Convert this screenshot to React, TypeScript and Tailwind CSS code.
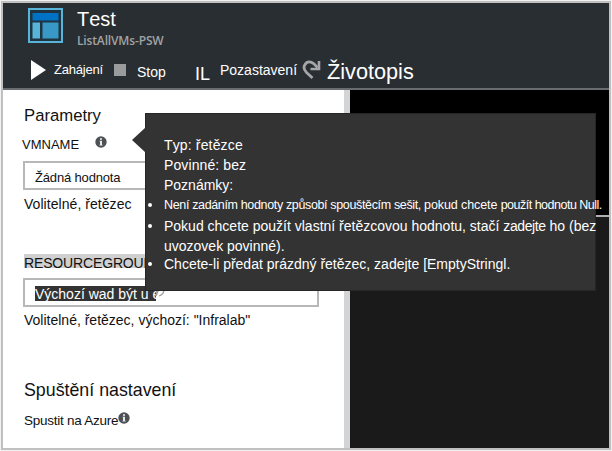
import React from "react";

function InfoIcon({ className = "" }: { className?: string }) {
  return (
    <svg className={className} width="12" height="12" viewBox="0 0 12 12">
      <circle cx="6" cy="6" r="5.7" fill="#4d5155" />
      <circle cx="6" cy="3" r="1.1" fill="#e8e8e8" />
      <path d="M4.6 4.8H7v4h.7v.7H4.4v-.7H5V5.5h-.4z" fill="#e8e8e8" />
    </svg>
  );
}

function RunbookIcon() {
  return (
    <svg width="35" height="35" viewBox="0 0 35 35" className="shrink-0">
      <rect x="1" y="1" width="33" height="33" fill="#1f3440" stroke="#59b4d9" strokeWidth="2" />
      <rect x="4.5" y="5" width="26" height="7.5" fill="#0072c6" />
      <rect x="4.5" y="14.5" width="7.5" height="16" fill="#59b4d9" />
      <rect x="14.5" y="14.5" width="16" height="16" fill="#3999c6" />
    </svg>
  );
}

function Header() {
  return (
    <header className="h-[87px] bg-[#292e32] border-b-2 border-[#6a6d70] text-white">
      <div className="flex h-[50px] pl-[25px] pt-[5px]">
        <RunbookIcon />
        <div className="ml-[14px]">
          <div className="text-[20px] leading-5 mt-[1px] [font-kerning:none]">Test</div>
          <div className="mt-[4px] font-['Open_Sans',sans-serif] text-[12px] font-semibold leading-4 tracking-[-0.15px] text-[#a0a3a5]">
            ListAllVMs-PSW
          </div>
        </div>
      </div>
      <div className="flex h-[35px] items-start pl-[28px] leading-5">
        <svg width="15" height="20" viewBox="0 0 15 20" className="mt-[7px]">
          <path d="M0 0v20L15 10z" fill="#fff" />
        </svg>
        <div className="ml-[8px] w-[60px] mt-[7px] text-[13px] tracking-[-0.2px]">Zahájení</div>
        <div className="mt-[11px] size-[12px] bg-[#999b9d]" />
        <div className="ml-[11px] mt-[9px] w-[58px] text-[14px]">Stop</div>
        <div className="mt-[11px] w-[25px] text-[18px]">IL</div>
        <div className="mt-[7px] w-[82px] text-[14px]">Pozastavení</div>
        <svg width="19" height="21" viewBox="0 0 19 21" className="mt-[6px]">
          <path d="M10.5 19 L4.5 13.5 C-1 8 4 1.5 9.5 3.3 C12.5 4.3 13.5 6.5 15.5 8.5" fill="none" stroke="#a4a6a8" strokeWidth="2.8" />
          <path d="M17 2v8H8.5" fill="none" stroke="#a4a6a8" strokeWidth="2.6" />
        </svg>
        <div className="ml-[6px] mt-[9px] text-[21.7px]">Životopis</div>
      </div>
    </header>
  );
}

function Parameters() {
  return (
    <section className="w-[347px] shrink-0 border-r-[6px] border-[#d2d4d6] bg-white pl-[20px] pt-[16px] leading-5 text-[#111]">
      <h2 className="pl-px text-[16.7px]">Parametry</h2>
      <div className="mt-[9px] -ml-px flex text-[13px]">
        VMNAME
        <InfoIcon className="ml-[16px] mt-[1px]" />
      </div>
      <div className="mt-[6px] h-[29px] w-[296px] border-2 border-[#b8b8b8] pl-[10px] pt-[5px] text-[13px] tracking-[-0.16px]">
        Žádná hodnota
      </div>
      <div className="mt-[4px] pl-px text-[14px] tracking-[0.05px]">Volitelné, řetězec</div>
      <div className="ml-px mt-[40px] h-[14px] w-[121px] bg-[#d0d0d0] text-[14px] leading-[18px] tracking-[-0.15px]">
        RESOURCEGROUP
      </div>
      <div className="mt-[10px] flex h-[29px] w-[296px] border-2 border-[#b8b8b8] pl-[10px] pt-[6px] text-[14px]">
        <span className="h-[15px] w-[121px] whitespace-nowrap bg-[#333] leading-[17px] text-white">Výchozí wad být u e</span>
        <svg width="10" height="10" viewBox="0 0 10 10" className="-ml-px mt-[2px]">
          <path d="M1 8L4 1M4 8c4-1 5-4 5-7M1 2c2 3 0 5-1 6" fill="none" stroke="#999" strokeWidth="1.2" />
        </svg>
      </div>
      <div className="mt-[3px] pl-px text-[14px]">Volitelné, řetězec, výchozí: "Infralab"</div>
      <h2 className="mt-[50px] pl-px text-[17.8px]">Spuštění nastavení</h2>
      <div className="mt-[11px] flex pl-px text-[13.5px] tracking-[-0.25px]">
        Spustit na Azure
        <InfoIcon className="mt-[1px]" />
      </div>
    </section>
  );
}

function Bullet({ className, children }: { className: string; children: React.ReactNode }) {
  return (
    <li className={"flex whitespace-nowrap " + className}>
      <span className="mt-[8px] mr-[12px] size-[4px] shrink-0 rounded-full bg-white" />
      <div>{children}</div>
    </li>
  );
}

function Tooltip() {
  return (
    <div className="absolute left-[145px] top-[113px] h-[178px] w-[451px] border border-[#262626] bg-[#333] text-[14px] leading-5 text-white">
      <svg width="14" height="26" viewBox="0 0 14 26" className="absolute -left-[14px] top-[13px]">
        <path d="M14 0L0 13l14 13z" fill="#333" />
      </svg>
      <div className="pl-[18px] pt-[21px]">
        <div className="tracking-[0.15px] [font-kerning:none]">Typ: řetězce</div>
        <div className="tracking-[0.1px]">Povinné: bez</div>
        <div>Poznámky:</div>
      </div>
      <ul className="pl-[2px]">
        <Bullet className="text-[12.5px]">
          <span className="tracking-[-0.35px]">Není zadáním hodnoty způsobí spouštěcím sešit, </span>
          <span className="tracking-[-0.1px]">pokud chcete </span>
          <span className="tracking-[-0.5px]">použít hodnotu Null.</span>
        </Bullet>
        <Bullet className="mt-px">
          Pokud chcete použít vlastní řetězcovou hodnotu, stačí <span className="tracking-[-0.4px]">zadejte</span> ho (bez
          <br />
          uvozovek povinné).
        </Bullet>
        <Bullet className="-mt-[2px]">Chcete-li předat prázdný řetězec, zadejte [EmptyStringl.</Bullet>
      </ul>
    </div>
  );
}

export default function App() {
  return (
    <div className="relative h-[451px] w-[612px] overflow-hidden bg-[#f1f1f1] p-px font-['Liberation_Sans',Arial,sans-serif]">
      <div className="flex h-[449px] w-[610px] flex-col border-2 border-[#c0c0c0]">
        <Header />
        <main className="flex flex-1">
          <Parameters />
          <section className="flex flex-1 flex-col bg-[#1a1a1a]">
            <div className="h-[127px] border-b-2 border-[#b0b0b0] bg-black" />
          </section>
        </main>
      </div>
      <Tooltip />
    </div>
  );
}
